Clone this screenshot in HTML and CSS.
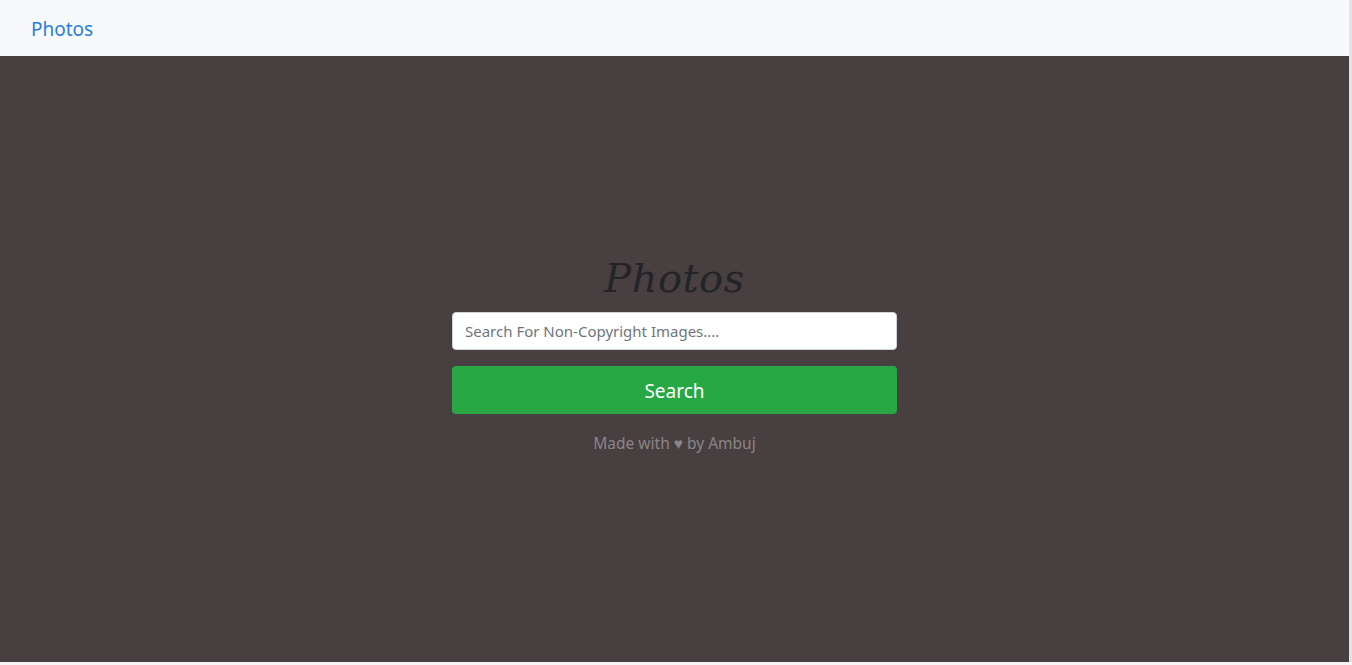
FILE: index.html
```html
<!DOCTYPE html>
<html>
<head>
<meta charset="utf-8">
<link rel="stylesheet" href="styles.css">
</head>
<body>
<nav class="navbar">
  <a class="brand" href="#">Photos</a>
</nav>
<main class="hero">
  <div class="panel">
    <h1 class="title">Photos</h1>
    <input class="search-input" type="text" placeholder="Search For Non-Copyright Images....">
    <button class="search-btn">Search</button>
    <p class="credit">Made with ♥ by Ambuj</p>
  </div>
</main>
</body>
</html>
```
FILE: styles.css
```css
html, body {
  margin: 0;
  padding: 0;
  background: #f5f5f6;
}
body {
  width: 1349px;
  font-family: "Noto Sans", "Open Sans", sans-serif;
  border-right: 3px solid #e4e4e6;
}
.navbar {
  height: 56px;
  background: #f8f9fa;
  display: flex;
  align-items: center;
  padding: 0 31px 0 31px;
}
.brand {
  color: #2a7ee0;
  font-size: 19px;
  text-decoration: none;
  padding-top: 2px;
}
.hero {
  height: 606px;
  background: #483f41;
  display: flex;
  justify-content: center;
}
.panel {
  width: 445px;
  display: flex;
  flex-direction: column;
  align-items: stretch;
  padding-top: 194px;
}
.title {
  margin: 0 0 6px;
  text-align: center;
  font-family: "DejaVu Serif", serif;
  font-style: italic;
  font-weight: normal;
  font-size: 40px;
  line-height: 56px;
  color: #232427;
  letter-spacing: 0.5px;
}
.search-input {
  height: 38px;
  box-sizing: border-box;
  border: 1px solid #ced4da;
  border-radius: 4px;
  padding: 0 12px;
  font-family: inherit;
  font-size: 15px;
  color: #495057;
  background: #fff;
}
.search-input::placeholder {
  color: #6c757d;
}
.search-btn {
  margin-top: 16px;
  height: 48px;
  border: none;
  border-radius: 4px;
  background: #28a745;
  color: #fff;
  font-family: inherit;
  font-size: 19px;
  padding-top: 2px;
}
.credit {
  margin: 18px 0 0;
  text-align: center;
  color: #8b8587;
  font-size: 15.5px;
}
```
